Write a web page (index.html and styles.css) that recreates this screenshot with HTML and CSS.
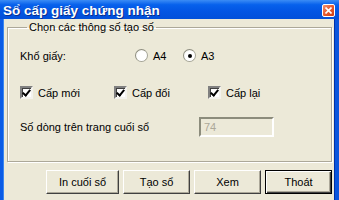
FILE: index.html
```html
<!DOCTYPE html>
<html lang="vi">
<head>
    <meta charset="UTF-8">
    <title>Sổ cấp giấy chứng nhận</title>
    <link rel="stylesheet" href="styles.css">
</head>
<body>
    <div class="window">
        <div class="titlebar">
            <span class="title">Sổ cấp giấy chứng nhận</span>
            <span class="close-btn">
                <svg width="7" height="7" viewBox="0 0 7 7"><path d="M0.5 0.5 L6.5 6.5 M6.5 0.5 L0.5 6.5" stroke="#fff" stroke-width="1.6"/></svg>
            </span>
        </div>
        <div class="frame">
            <fieldset class="group">
                <legend>Chọn các thông số tạo số</legend>
                <div class="row row-paper">
                    <span class="field-label">Khổ giấy:</span>
                    <label class="opt opt-a4"><span class="radio"></span>A4</label>
                    <label class="opt"><span class="radio checked"></span>A3</label>
                </div>
                <div class="row row-checks">
                    <label class="check-opt"><span class="checkbox checked"></span>Cấp mới</label>
                    <label class="check-opt"><span class="checkbox checked"></span>Cấp đổi</label>
                    <label class="check-opt"><span class="checkbox checked"></span>Cấp lại</label>
                </div>
                <div class="row row-lines">
                    <span class="lines-label">Số dòng trên trang cuối sổ</span>
                    <span class="textbox">74</span>
                </div>
            </fieldset>
            <div class="buttons">
                <button class="btn btn-wide">In cuối sổ</button>
                <button class="btn">Tạo sổ</button>
                <button class="btn">Xem</button>
                <button class="btn btn-default">Thoát</button>
            </div>
        </div>
    </div>
</body>
</html>
```

FILE: styles.css
```css
body {
    margin: 0;
    padding: 0;
    font-family: "Liberation Sans", Arial, sans-serif;
    font-size: 11px;
    color: #000;
    background: #ECE9D8;
}
.window {
    width: 339px;
    height: 200px;
    overflow: hidden;
    background: #ECE9D8;
}
.titlebar {
    height: 19px;
    display: flex;
    align-items: center;
    justify-content: space-between;
    padding: 0 4px 0 3px;
    background: linear-gradient(to bottom, #3B8CF5 0%, #0761EC 25%, #0355E3 60%, #0250DA 100%);
}
.title {
    color: #fff;
    font-weight: bold;
    font-size: 13.5px;
    text-shadow: 1px 1px 0 #0A2E8C;
    padding-top: 1px;
}
.close-btn {
    width: 11px;
    height: 11px;
    margin-top: 1px;
    display: flex;
    align-items: center;
    justify-content: center;
    border: 1px solid #fff;
    border-radius: 2px;
    background: linear-gradient(135deg, #F39270 0%, #E65A30 50%, #CC3E14 100%);
}
.frame {
    height: 181px;
    border-left: 3px solid #0A5BE6;
    border-right: 4px solid #0A55DD;
    box-shadow: inset 1px 0 0 #3A86F0, inset -1px 0 0 #0031A8;
    box-sizing: border-box;
    padding: 2px 0 0 4px;
}
.group {
    width: 325px;
    height: 141px;
    box-sizing: border-box;
    margin: 0;
    padding: 15px 0 0 12px;
    border: 1px solid #ACA899;
    box-shadow: inset 1px 1px 0 #fff, 1px 1px 0 #fff;
}
.group legend {
    padding: 0 2px;
    margin-left: 7px;
    line-height: 13px;
}
.row {
    display: flex;
    align-items: center;
}
.field-label {
    width: 115px;
}
.opt {
    display: flex;
    align-items: center;
    gap: 5px;
}
.opt-a4 {
    width: 48px;
}
.radio {
    width: 11px;
    height: 11px;
    border-radius: 50%;
    border: 1px solid #A5A597;
    border-top-color: #8E8E80;
    border-left-color: #8E8E80;
    background: radial-gradient(circle at 60% 60%, #fff 55%, #E4E2D6 100%);
    display: flex;
    align-items: center;
    justify-content: center;
}
.radio.checked::after {
    content: "";
    width: 4px;
    height: 4px;
    border-radius: 50%;
    background: #000;
}
.row-checks {
    margin-top: 24px;
}
.check-opt {
    width: 94px;
    display: flex;
    align-items: center;
    gap: 5px;
}
.checkbox {
    width: 9px;
    height: 9px;
    background: #fff;
    border-top: 2px solid #808080;
    border-left: 2px solid #808080;
    border-bottom: 2px solid #F4F3EE;
    border-right: 2px solid #F4F3EE;
    box-shadow: inset 1px 1px 0 #404040;
    position: relative;
}
.checkbox.checked::after {
    content: "";
    position: absolute;
    left: 2px;
    top: 0;
    width: 3px;
    height: 6px;
    border-right: 2px solid #000;
    border-bottom: 2px solid #000;
    transform: rotate(40deg);
}
.row-lines {
    margin-top: 18px;
}
.lines-label {
    width: 179px;
}
.textbox {
    width: 75px;
    height: 20px;
    box-sizing: border-box;
    padding: 2px 0 0 3px;
    color: #ACA899;
    border-top: 2px solid #8C8C7C;
    border-left: 2px solid #8C8C7C;
    border-bottom: 2px solid #fff;
    border-right: 2px solid #fff;
}
.buttons {
    display: flex;
    justify-content: flex-end;
    gap: 4px;
    margin-top: 8px;
    width: 325px;
}
.btn {
    width: 67px;
    height: 24px;
    font-family: "Liberation Sans", Arial, sans-serif;
    font-size: 11px;
    color: #000;
    background: #ECE9D8;
    border-top: 1px solid #fff;
    border-left: 1px solid #fff;
    border-bottom: 1px solid #404040;
    border-right: 1px solid #404040;
    box-shadow: inset -1px -1px 0 #ACA899;
    padding: 0;
}
.btn-wide {
    width: 73px;
}
.btn-default {
    border: 1px solid #000;
    box-shadow: inset 1px 1px 0 #fff, inset -1px -1px 0 #404040, inset -2px -2px 0 #ACA899;
}
```
